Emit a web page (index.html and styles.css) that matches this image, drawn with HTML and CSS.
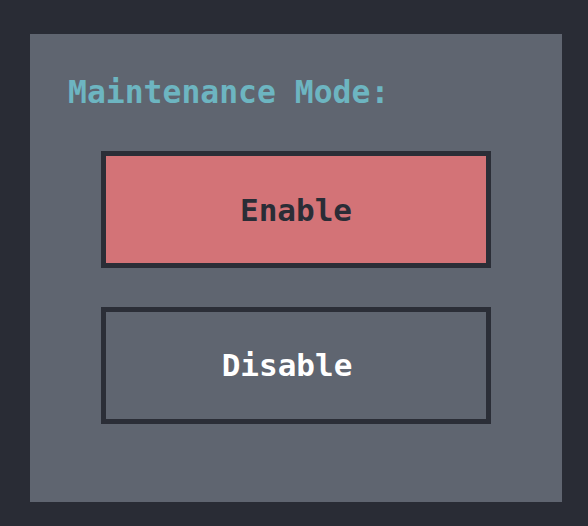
FILE: index.html
```html
<!DOCTYPE html>
<html lang="en">
<head>
<meta charset="utf-8">
<title>Maintenance Mode</title>
<link rel="stylesheet" href="styles.css">
</head>
<body>
  <main class="panel">
    <h1 class="title">Maintenance Mode:</h1>
    <div class="actions">
      <button class="btn btn-enable" type="button">Enable</button>
      <button class="btn btn-disable" type="button">Disable</button>
    </div>
  </main>
</body>
</html>
```

FILE: styles.css
```css
html, body {
  margin: 0;
  padding: 0;
}

body {
  background: #292c35;
  width: 588px;
  height: 526px;
  padding: 34px 0 0 30px;
  box-sizing: border-box;
  font-family: "DejaVu Sans Mono", "Liberation Mono", monospace;
}

.panel {
  width: 532px;
  height: 468px;
  box-sizing: border-box;
  background: #5f6570;
  padding: 39px 0 0 0;
  display: flex;
  flex-direction: column;
}

.title {
  margin: 0 0 40px 38px;
  font-size: 31.4px;
  line-height: 38px;
  font-weight: bold;
  color: #6db5c1;
}

.actions {
  display: flex;
  flex-direction: column;
  align-items: center;
  gap: 39px;
}

.btn {
  width: 390px;
  height: 117px;
  box-sizing: border-box;
  border: 5px solid #2b2e37;
  margin: 0;
  padding: 0;
  font-family: inherit;
  font-size: 31px;
  font-weight: bold;
  display: flex;
  align-items: center;
  justify-content: center;
  cursor: pointer;
}

.btn-enable {
  background: #d37377;
  color: #2a2d36;
}

.btn-disable {
  background: #5f6570;
  color: #ffffff;
  padding: 0 18px 2px 0;
}
```
